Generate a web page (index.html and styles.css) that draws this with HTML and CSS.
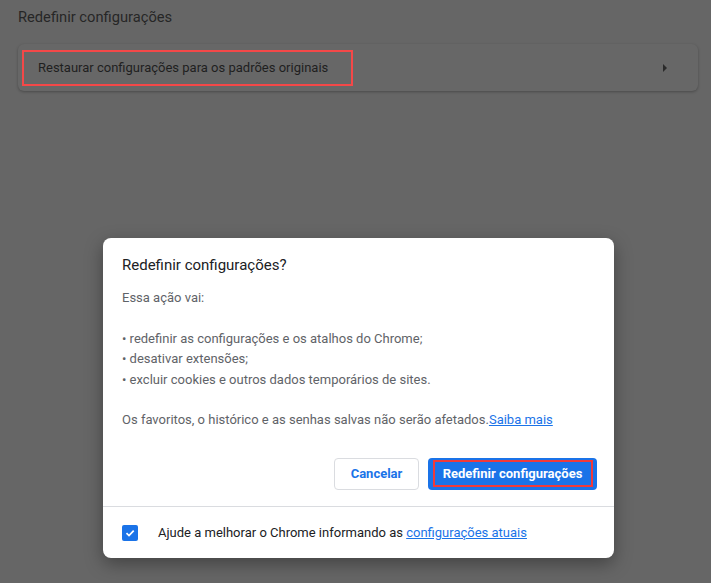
FILE: index.html
```html
<!DOCTYPE html>
<html lang="pt-BR">
<head>
<meta charset="utf-8">
<title>Redefinir configurações</title>
<link rel="stylesheet" href="styles.css">
</head>
<body>
<div class="page">
  <h2 class="section-title">Redefinir configurações</h2>
  <div class="card">
    <span class="card-label">Restaurar configurações para os padrões originais</span>
    <svg class="arrow" width="6" height="10" viewBox="0 0 6 10"><path d="M1 1 L5 5 L1 9 Z" fill="#2a2a2a"/></svg>
  </div>
</div>

<div class="dialog">
  <div class="dialog-body">
    <div class="dialog-title">Redefinir configurações?</div>
    <div class="dialog-text">
      <p>Essa ação vai:</p>
      <p class="blank">&nbsp;</p>
      <p>• redefinir as configurações e os atalhos do Chrome;</p>
      <p>• desativar extensões;</p>
      <p>• excluir cookies e outros dados temporários de sites.</p>
      <p class="blank">&nbsp;</p>
      <p>Os favoritos, o histórico e as senhas salvas não serão afetados.<a href="#" class="link">Saiba mais</a></p>
    </div>
    <div class="buttons">
      <button class="btn btn-cancel">Cancelar</button>
      <button class="btn btn-primary"><span class="btn-mark">Redefinir configurações</span></button>
    </div>
  </div>
  <div class="dialog-footer">
    <span class="checkbox">
      <svg width="12" height="12" viewBox="0 0 12 12"><path d="M2.5 6.2 L5 8.6 L9.7 3.6" fill="none" stroke="#fff" stroke-width="1.7"/></svg>
    </span>
    <span class="footer-text">Ajude a melhorar o Chrome informando as <a href="#" class="link">configurações atuais</a></span>
  </div>
</div>
</body>
</html>
```

FILE: styles.css
```css
html, body {
  margin: 0;
  padding: 0;
}
body {
  background: #666666;
  font-family: Roboto, "Liberation Sans", Arial, sans-serif;
  width: 711px;
  height: 583px;
  overflow: hidden;
  position: relative;
}
.page {
  padding: 7px 13px 0 18px;
}
.section-title {
  margin: 0;
  font-size: 14.7px;
  font-weight: 400;
  line-height: 20px;
  color: #262626;
}
.card {
  margin-top: 17px;
  height: 47px;
  border-radius: 6px;
  background: #676767;
  box-shadow: 0 1px 3px rgba(0, 0, 0, 0.28);
  display: flex;
  align-items: center;
  padding: 0 30px 0 4px;
  box-sizing: border-box;
}
.card-label {
  border: 2px solid #f44848;
  height: 32px;
  line-height: 32px;
  padding: 0 23px 0 14px;
  font-size: 13px;
  color: #1f1f1f;
  flex: none;
}
.arrow {
  margin-left: auto;
}
.dialog {
  position: absolute;
  left: 103px;
  top: 238px;
  width: 511px;
  height: 320px;
  background: #ffffff;
  border-radius: 8px;
  box-shadow: 0 6px 18px rgba(0, 0, 0, 0.35);
  display: flex;
  flex-direction: column;
  box-sizing: border-box;
}
.dialog-body {
  padding: 15px 17px 0 19px;
  border-bottom: 1px solid #dadce0;
  height: 269px;
  box-sizing: border-box;
}
.dialog-title {
  font-size: 15px;
  line-height: 24px;
  color: #202124;
}
.dialog-text {
  margin-top: 11px;
  font-size: 13px;
  line-height: 20.4px;
  color: #5f6368;
}
.dialog-text p {
  margin: 0;
}
.link {
  color: #1a73e8;
  text-decoration: underline;
}
.buttons {
  margin-top: 27px;
  display: flex;
  justify-content: flex-end;
  gap: 9px;
}
.btn {
  font-family: Roboto, "Liberation Sans", Arial, sans-serif;
  font-size: 13px;
  font-weight: 700;
  height: 32px;
  border-radius: 4px;
  box-sizing: border-box;
  cursor: pointer;
}
.btn-cancel {
  width: 85px;
  background: #ffffff;
  border: 1px solid #dadce0;
  color: #1a73e8;
}
.btn-primary {
  width: 169px;
  background: #1a73e8;
  border: none;
  color: #ffffff;
  padding: 0;
  display: flex;
  align-items: center;
  justify-content: center;
}
.btn-mark {
  display: block;
  width: 160px;
  height: 27px;
  line-height: 23px;
  border: 2px solid #f03a3a;
  box-sizing: border-box;
}
.dialog-footer {
  flex: 1;
  display: flex;
  align-items: center;
  padding: 0 0 0 19px;
}
.checkbox {
  width: 16px;
  height: 16px;
  border-radius: 2px;
  background: #1a73e8;
  display: flex;
  align-items: center;
  justify-content: center;
  margin-left: 0;
}
.footer-text {
  margin-left: 20px;
  font-size: 13px;
  color: #202124;
}
```
